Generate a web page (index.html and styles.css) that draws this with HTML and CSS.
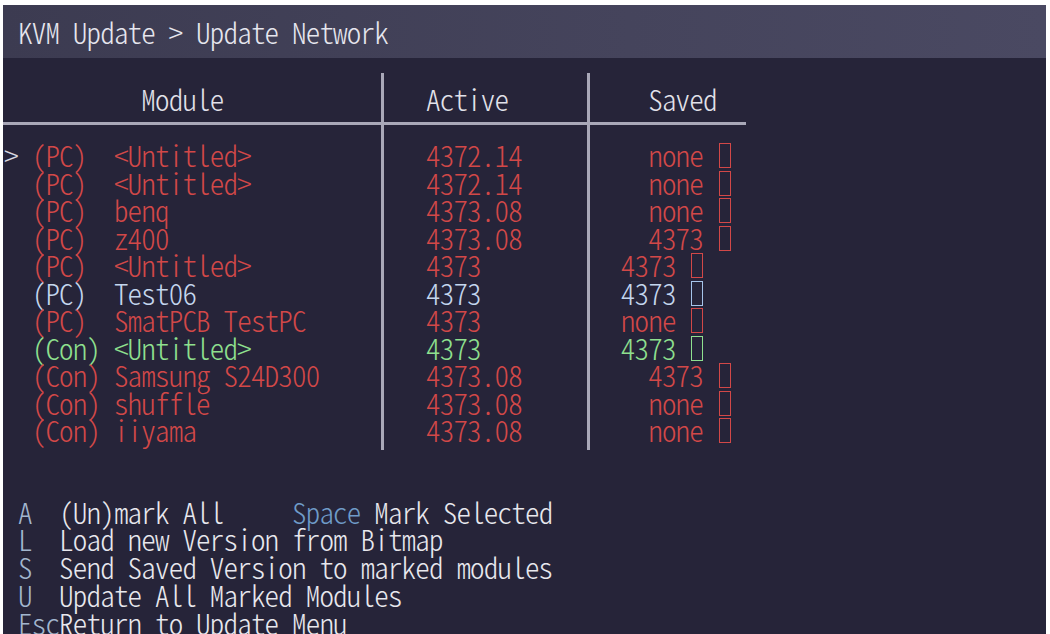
FILE: index.html
```html
<!DOCTYPE html>
<html>
<head>
<meta charset="utf-8">
<title>KVM Update</title>
<link rel="stylesheet" href="styles.css">
</head>
<body>
<div class="screen">
  <div class="titlebar">KVM Update &gt; Update Network</div>
  <div class="table">
    <div class="cell c1 head">          Module</div>
    <div class="cell c2 head">Active</div>
    <div class="cell c3 head">  Saved</div>
    <div class="hline"></div>
    <div class="cell c1 body">
      <div class="ln red"><span class="wht">&gt;</span> (PC)  &lt;Untitled&gt;</div>
      <div class="ln red">  (PC)  &lt;Untitled&gt;</div>
      <div class="ln red">  (PC)  benq</div>
      <div class="ln red">  (PC)  z400</div>
      <div class="ln red">  (PC)  &lt;Untitled&gt;</div>
      <div class="ln blu">  (PC)  Test06</div>
      <div class="ln red">  (PC)  SmatPCB TestPC</div>
      <div class="ln grn">  (Con) &lt;Untitled&gt;</div>
      <div class="ln red">  (Con) Samsung S24D300</div>
      <div class="ln red">  (Con) shuffle</div>
      <div class="ln red">  (Con) iiyama</div>
    </div>
    <div class="cell c2 body">
      <div class="ln red">4372.14</div>
      <div class="ln red">4372.14</div>
      <div class="ln red">4373.08</div>
      <div class="ln red">4373.08</div>
      <div class="ln red">4373</div>
      <div class="ln blu">4373</div>
      <div class="ln red">4373</div>
      <div class="ln grn">4373</div>
      <div class="ln red">4373.08</div>
      <div class="ln red">4373.08</div>
      <div class="ln red">4373.08</div>
    </div>
    <div class="cell c3 body">
      <div class="ln red">  none <span class="box"></span></div>
      <div class="ln red">  none <span class="box"></span></div>
      <div class="ln red">  none <span class="box"></span></div>
      <div class="ln red">  4373 <span class="box"></span></div>
      <div class="ln red">4373 <span class="box"></span></div>
      <div class="ln blu">4373 <span class="box bbox"></span></div>
      <div class="ln red">none <span class="box"></span></div>
      <div class="ln grn">4373 <span class="box"></span></div>
      <div class="ln red">  4373 <span class="box"></span></div>
      <div class="ln red">  none <span class="box"></span></div>
      <div class="ln red">  none <span class="box"></span></div>
    </div>
  </div>
  <div class="help">
    <div class="hl"> <span class="key">A</span>  (Un)mark All     <span class="key2">Space</span> Mark Selected</div>
    <div class="hl"> <span class="key">L</span>  Load new Version from Bitmap</div>
    <div class="hl"> <span class="key">S</span>  Send Saved Version to marked modules</div>
    <div class="hl"> <span class="key">U</span>  Update All Marked Modules</div>
    <div class="hl"> <span class="key">Esc</span>Return to Update Menu</div>
  </div>
</div>
</body>
</html>
```
FILE: styles.css
```css
html, body {
  margin: 0;
  padding: 0;
  background: #ffffff;
}
body {
  width: 1050px;
  height: 634px;
  overflow: hidden;
}
.screen {
  margin: 5px 4px 0 3px;
  height: 629px;
  background: #262439;
  overflow: hidden;
  font-family: "Noto Sans CJK JP", "Liberation Mono", monospace;
  font-feature-settings: "hwid" 1;
  font-weight: 300;
  font-size: 29px;
  letter-spacing: -0.8px;
  line-height: 27.5px;
}
.titlebar, .head, .ln, .hl {
  white-space: pre;
}
.titlebar {
  height: 53px;
  box-sizing: border-box;
  padding: 12.8px 0 0 15px;
  background: linear-gradient(to right, #3c3b51, #45445c 60%, #4a4962);
  color: #e6e6ee;
}
.table {
  margin-top: 15px;
  display: grid;
  grid-template-columns: 381px 206px 156px;
  width: 743px;
}
.cell {
  box-sizing: border-box;
}
.c1, .c2 {
  border-right: 3px solid #a9a8b8;
}
.c1 { padding-left: 1.3px; }
.c2 { padding-left: 42px; }
.c3 { padding-left: 30.8px; }
.head {
  padding-top: 12.3px;
  height: 49px;
  color: #e2e2ea;
}
.hline {
  grid-column: 1 / -1;
  height: 3px;
  background: #a9a8b8;
}
.body {
  padding-top: 16.3px;
  padding-bottom: 6px;
}
.ln {
  height: 27.5px;
}
.red { color: #d24848; }
.blu { color: #c4d6ee; }
.grn { color: #8fe08f; }
.wht { color: #d8d8e0; }
.box {
  display: inline-block;
  width: 10px;
  height: 23px;
  border: 1.5px solid currentColor;
  margin-left: 2px;
  vertical-align: -1px;
}
.bbox { border-color: #a6c4ea; }
.help {
  margin-top: 48px;
  padding-left: 1.3px;
  color: #e8e8ee;
  line-height: 27.7px;
}
.hl {
  height: 27.7px;
}
.key { color: #a2b6ce; }
.key2 { color: #6f9bc8; }
```
